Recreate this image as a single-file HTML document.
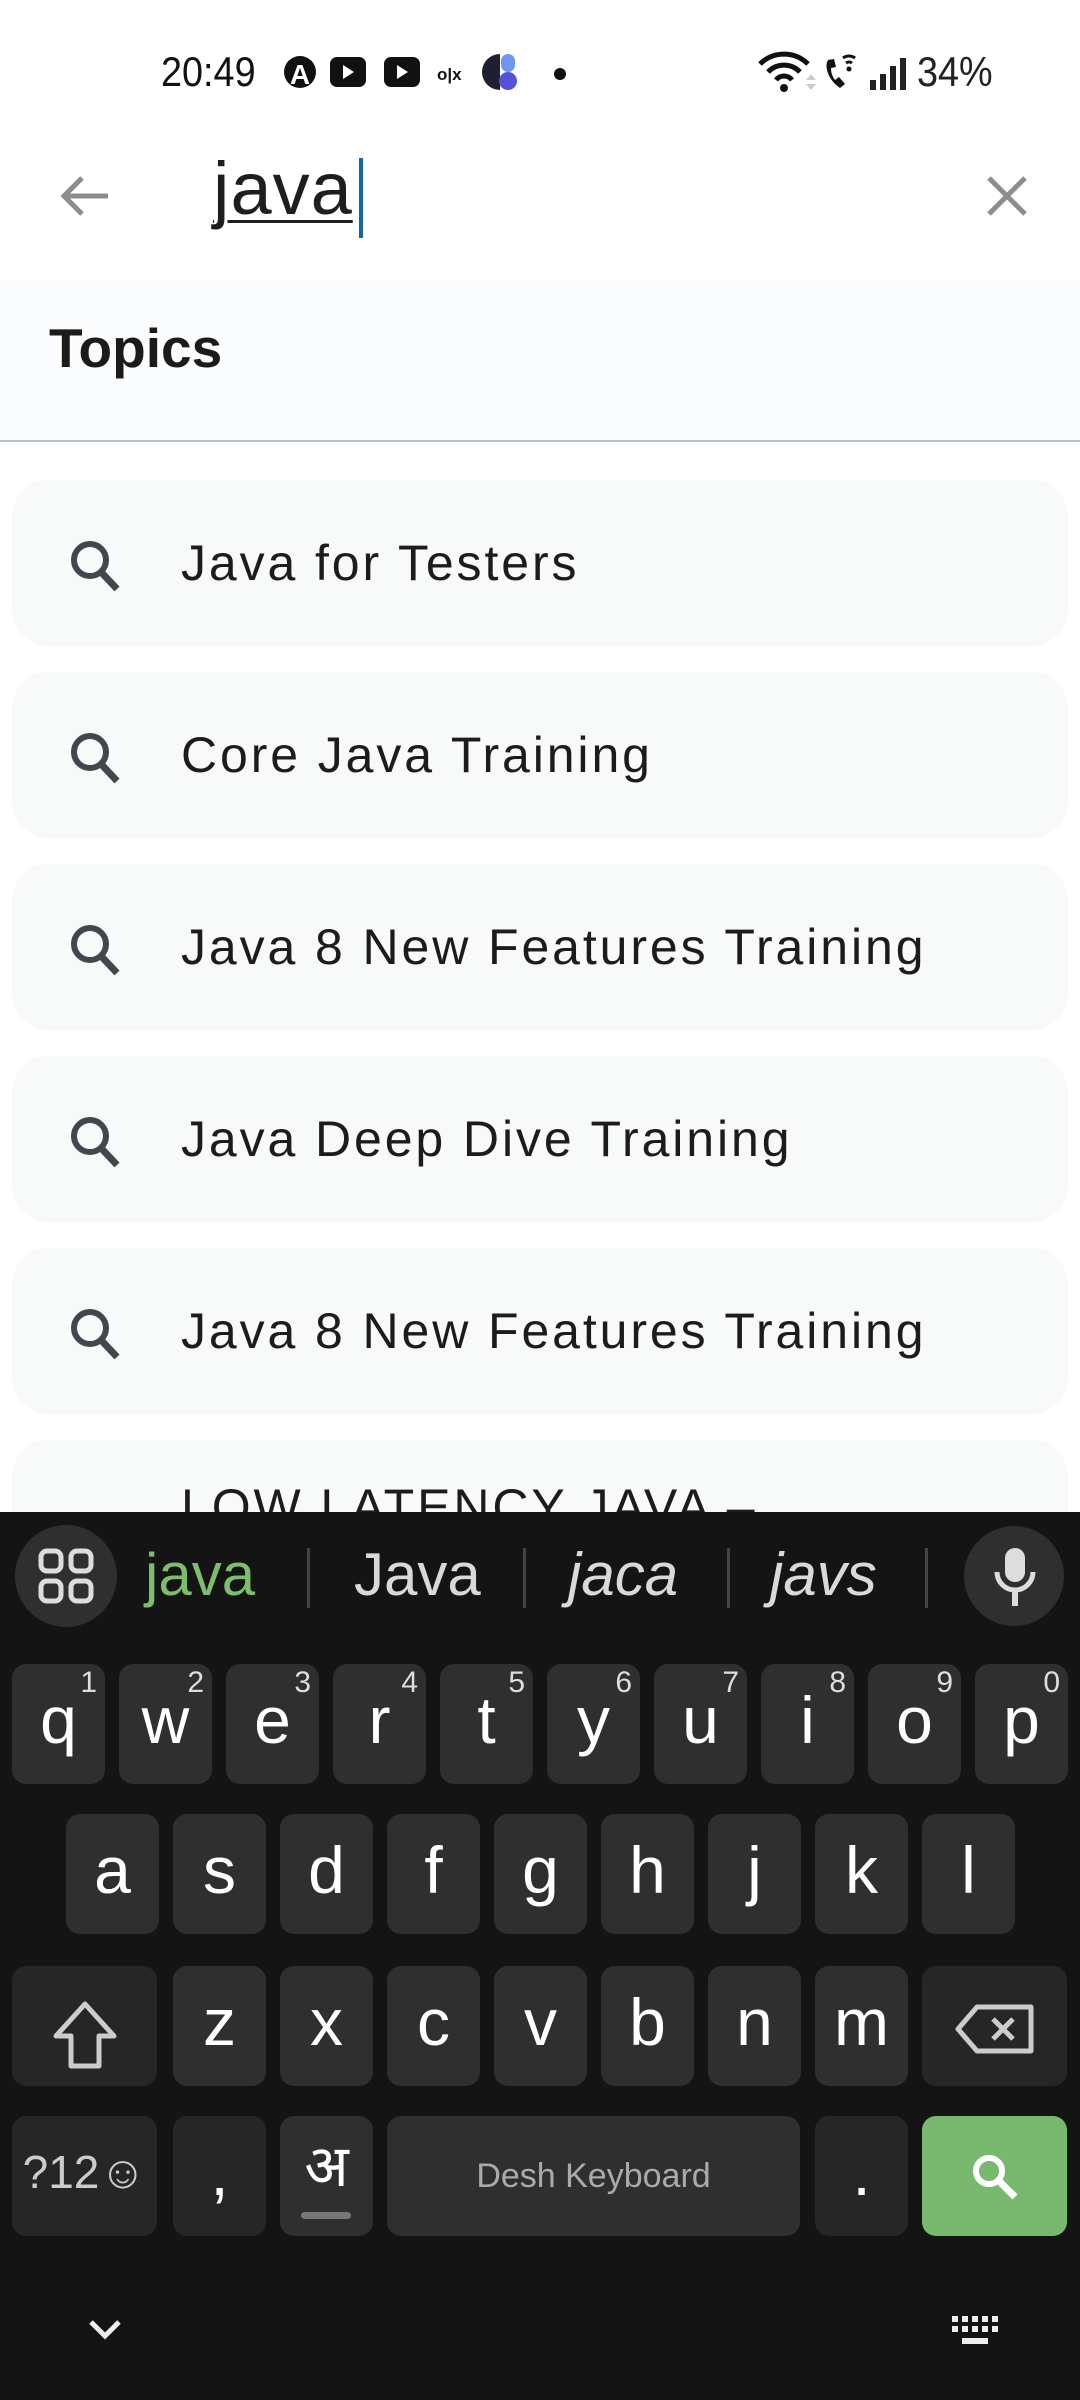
<!DOCTYPE html>
<html><head><meta charset="utf-8"><style>
*{margin:0;padding:0;box-sizing:border-box}
body{width:1080px;height:2400px;position:relative;overflow:hidden;background:#fff;font-family:"Liberation Sans",sans-serif}
.abs{position:absolute}
.sb{top:48px;font-size:42px;color:#111;transform:scaleX(0.9);transform-origin:left}
.topics{top:280px;left:0;width:1080px;height:162px;background:#fbfcfe;border-bottom:2px solid #b3c0cb}
.card{left:12px;width:1056px;height:166px;background:#f8f9f9;border-radius:36px}
.card svg{position:absolute;left:56px;top:60px}
.card span{position:absolute;left:169px;top:54px;font-size:50px;letter-spacing:2.9px;color:#1c1c1c}
.kb{top:1512px;left:0;width:1080px;height:888px;background:#141414}
.key{position:absolute;width:93px;height:120px;background:#2f2f2f;border-radius:14px;color:#fff;font-size:66px;text-align:center;line-height:112px}
.key sup{position:absolute;right:8px;top:4px;font-size:30px;line-height:30px;color:#ddd}
.dk{background:#262626}
.sug{position:absolute;top:1540px;font-size:60px;color:#d9d9d9}
.sep{position:absolute;top:1548px;width:3px;height:60px;background:#444}
</style></head><body>
<div class="abs sb" style="left:161px">20:49</div>
<svg class="abs" style="left:280px;top:50px" width="300" height="44">
<circle cx="20" cy="22" r="16" fill="#111"/><text x="20" y="34" font-size="28" fill="#fff" text-anchor="middle" font-family="Liberation Sans" font-weight="bold">A</text>
<rect x="50" y="7" width="36" height="30" rx="7" fill="#111"/><path d="M63 15v14l11-7z" fill="#fff"/>
<rect x="104" y="7" width="36" height="30" rx="7" fill="#111"/><path d="M117 15v14l11-7z" fill="#fff"/>
<text x="157" y="30" font-size="17" font-weight="bold" fill="#111" font-family="Liberation Sans">o|x</text>
<path d="M220 4a18 18 0 0 0 0 36z" fill="#1c2030"/><rect x="221" y="4" width="14" height="18" rx="7" fill="#6f95ee"/><circle cx="228" cy="31" r="9" fill="#5452d8"/>
<circle cx="280" cy="24" r="6" fill="#111"/>
</svg>
<svg class="abs" style="left:756px;top:50px" width="170" height="44">
<path d="M4 14a34 34 0 0 1 48 0M12 22a22 22 0 0 1 32 0M20 30a10 10 0 0 1 16 0" stroke="#111" stroke-width="5" fill="none"/><circle cx="28" cy="38" r="4" fill="#111"/>
<path d="M50 30l5-6 5 6zM50 34l5 6 5-6z" fill="#ccc"/>
<path d="M72 10c-4 6 0 20 12 28l5-4-6-7-4 3c-3-4-4-8-4-12l5-1-2-8z" fill="#111"/>
<path d="M87 8a10 10 0 0 1 12 0M90 13a5 5 0 0 1 6 0" stroke="#111" stroke-width="3" fill="none"/><circle cx="93" cy="19" r="2.5" fill="#111"/>
<rect x="114" y="30" width="6" height="10" fill="#222"/><rect x="124" y="24" width="6" height="16" fill="#222"/><rect x="134" y="16" width="6" height="24" fill="#222"/><rect x="144" y="8" width="6" height="32" fill="#222"/>
</svg>
<div class="abs sb" style="left:917px;color:#222">34%</div>

<svg class="abs" style="left:56px;top:174px" width="56" height="44"><path d="M52 22H8M26 4L8 22l18 18" stroke="#8d8d8d" stroke-width="5" fill="none"/></svg>
<div class="abs" style="left:213px;top:146px;font-size:74px;color:#1e1e1e;letter-spacing:1px;text-decoration:underline;text-decoration-thickness:3px;text-underline-offset:6px">java</div>
<div class="abs" style="left:359px;top:158px;width:4px;height:80px;background:#1565a8"></div>
<svg class="abs" style="left:985px;top:174px" width="44" height="44"><path d="M4 4l36 36M40 4L4 40" stroke="#8d8d8d" stroke-width="5"/></svg>

<div class="abs topics"><div class="abs" style="left:49px;top:36px;font-size:55px;font-weight:bold;color:#1b1b1b">Topics</div></div>

<div class="abs card" style="top:480px"><svg width="56" height="60"><circle cx="22" cy="20" r="16" stroke="#43474d" stroke-width="6" fill="none"/><path d="M33 32l16 17" stroke="#43474d" stroke-width="7"/></svg><span>Java for Testers</span></div>
<div class="abs card" style="top:672px"><svg width="56" height="60"><circle cx="22" cy="20" r="16" stroke="#43474d" stroke-width="6" fill="none"/><path d="M33 32l16 17" stroke="#43474d" stroke-width="7"/></svg><span>Core Java Training</span></div>
<div class="abs card" style="top:864px"><svg width="56" height="60"><circle cx="22" cy="20" r="16" stroke="#43474d" stroke-width="6" fill="none"/><path d="M33 32l16 17" stroke="#43474d" stroke-width="7"/></svg><span>Java 8 New Features Training</span></div>
<div class="abs card" style="top:1056px"><svg width="56" height="60"><circle cx="22" cy="20" r="16" stroke="#43474d" stroke-width="6" fill="none"/><path d="M33 32l16 17" stroke="#43474d" stroke-width="7"/></svg><span>Java Deep Dive Training</span></div>
<div class="abs card" style="top:1248px"><svg width="56" height="60"><circle cx="22" cy="20" r="16" stroke="#43474d" stroke-width="6" fill="none"/><path d="M33 32l16 17" stroke="#43474d" stroke-width="7"/></svg><span>Java 8 New Features Training</span></div>
<div class="abs card" style="top:1440px"><span style="top:38px">LOW LATENCY JAVA –</span></div>

<div class="abs kb"></div>
<div class="abs" style="left:15px;top:1525px;width:102px;height:102px;border-radius:51px;background:#2f2f2f"></div>
<svg class="abs" style="left:38px;top:1548px" width="56" height="56"><g fill="none" stroke="#ddd" stroke-width="5"><rect x="3" y="3" width="20" height="20" rx="6"/><rect x="33" y="3" width="20" height="20" rx="6"/><rect x="3" y="33" width="20" height="20" rx="6"/><rect x="33" y="33" width="20" height="20" rx="6"/></g></svg>
<div class="sug" style="left:145px;color:#7cbd6e">java</div>
<div class="sep" style="left:307px"></div>
<div class="sug" style="left:354px">Java</div>
<div class="sep" style="left:523px"></div>
<div class="sug" style="left:568px;font-style:italic">jaca</div>
<div class="sep" style="left:727px"></div>
<div class="sug" style="left:770px;font-style:italic">javs</div>
<div class="sep" style="left:925px"></div>
<div class="abs" style="left:964px;top:1526px;width:100px;height:100px;border-radius:50px;background:#2f2f2f"></div>
<svg class="abs" style="left:990px;top:1546px" width="50" height="64"><rect x="15" y="2" width="20" height="34" rx="10" fill="#ddd"/><path d="M7 26a18 18 0 0 0 36 0" stroke="#ddd" stroke-width="5" fill="none"/><path d="M25 44v16" stroke="#ddd" stroke-width="6"/></svg>

<div class="key" style="left:12px;top:1664px">q<sup>1</sup></div>
<div class="key" style="left:119px;top:1664px">w<sup>2</sup></div>
<div class="key" style="left:226px;top:1664px">e<sup>3</sup></div>
<div class="key" style="left:333px;top:1664px">r<sup>4</sup></div>
<div class="key" style="left:440px;top:1664px">t<sup>5</sup></div>
<div class="key" style="left:547px;top:1664px">y<sup>6</sup></div>
<div class="key" style="left:654px;top:1664px">u<sup>7</sup></div>
<div class="key" style="left:761px;top:1664px">i<sup>8</sup></div>
<div class="key" style="left:868px;top:1664px">o<sup>9</sup></div>
<div class="key" style="left:975px;top:1664px">p<sup>0</sup></div>

<div class="key" style="left:66px;top:1814px">a</div>
<div class="key" style="left:173px;top:1814px">s</div>
<div class="key" style="left:280px;top:1814px">d</div>
<div class="key" style="left:387px;top:1814px">f</div>
<div class="key" style="left:494px;top:1814px">g</div>
<div class="key" style="left:601px;top:1814px">h</div>
<div class="key" style="left:708px;top:1814px">j</div>
<div class="key" style="left:815px;top:1814px">k</div>
<div class="key" style="left:922px;top:1814px">l</div>

<div class="key dk" style="left:12px;top:1966px;width:145px"><svg style="margin-top:34px" width="70" height="70"><path d="M35 4L6 36h15v30h28V36h15z" stroke="#ccc" stroke-width="5" fill="none" stroke-linejoin="round"/></svg></div>
<div class="key" style="left:173px;top:1966px">z</div>
<div class="key" style="left:280px;top:1966px">x</div>
<div class="key" style="left:387px;top:1966px">c</div>
<div class="key" style="left:494px;top:1966px">v</div>
<div class="key" style="left:601px;top:1966px">b</div>
<div class="key" style="left:708px;top:1966px">n</div>
<div class="key" style="left:815px;top:1966px">m</div>
<div class="key dk" style="left:922px;top:1966px;width:145px"><svg style="margin-top:38px" width="80" height="50"><path d="M22 3h54v44H22L3 25z" stroke="#ccc" stroke-width="5" fill="none" stroke-linejoin="round"/><path d="M38 15l20 20M58 15L38 35" stroke="#ccc" stroke-width="5"/></svg></div>

<div class="key dk" style="left:12px;top:2116px;width:145px;font-size:46px;color:#ccc">?12☺</div>
<div class="key dk" style="left:173px;top:2116px">,</div>
<div class="key" style="left:280px;top:2116px;font-family:'Noto Sans CJK SC',sans-serif;font-size:58px;line-height:90px">अ<div style="position:absolute;left:21px;top:96px;width:50px;height:7px;border-radius:4px;background:#777"></div></div>
<div class="key" style="left:387px;top:2116px;width:413px;font-size:34px;color:#aaa;line-height:120px">Desh Keyboard</div>
<div class="key dk" style="left:815px;top:2116px">.</div>
<div class="key" style="left:922px;top:2116px;width:145px;background:#79b86f"><svg style="margin-top:36px" width="50" height="50"><circle cx="19" cy="19" r="13" stroke="#fff" stroke-width="6" fill="none"/><path d="M28 28l17 17" stroke="#fff" stroke-width="7"/></svg></div>

<svg class="abs" style="left:88px;top:2318px" width="34" height="24"><path d="M3 4l14 14 14-14" stroke="#eee" stroke-width="5" fill="none"/></svg>
<svg class="abs" style="left:950px;top:2314px" width="50" height="34"><g fill="#eee"><rect x="2" y="2" width="6" height="6"/><rect x="12" y="2" width="6" height="6"/><rect x="22" y="2" width="6" height="6"/><rect x="32" y="2" width="6" height="6"/><rect x="42" y="2" width="6" height="6"/><rect x="2" y="12" width="6" height="6"/><rect x="12" y="12" width="6" height="6"/><rect x="22" y="12" width="6" height="6"/><rect x="32" y="12" width="6" height="6"/><rect x="42" y="12" width="6" height="6"/><rect x="12" y="24" width="26" height="6"/></g></svg>
</body></html>
